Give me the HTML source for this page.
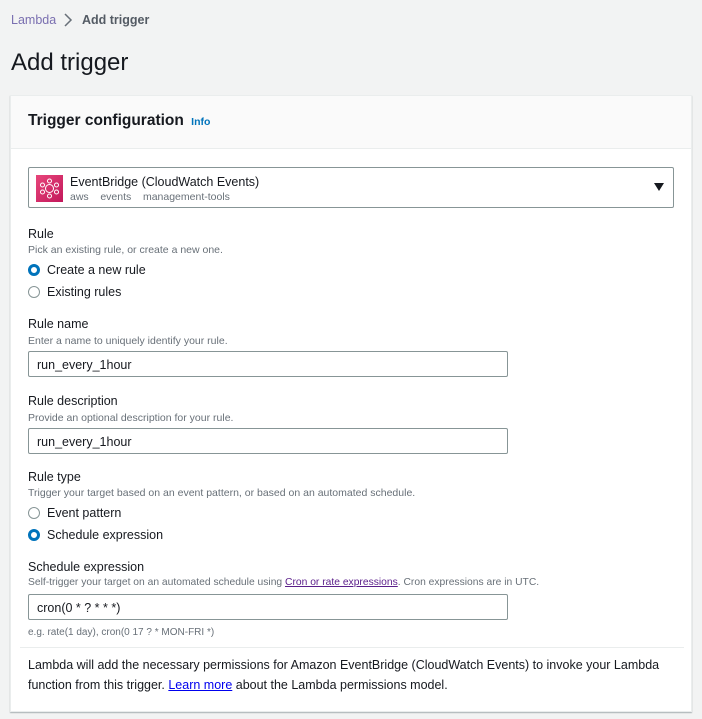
<!DOCTYPE html>
<html><head><style>
*{margin:0;padding:0;box-sizing:border-box}
body{width:702px;height:719px;background:#f2f3f3;font-family:"Liberation Sans",sans-serif;color:#16191f;position:relative;overflow:hidden}
.a{position:absolute;white-space:nowrap}
.lbl{font-size:12.5px;color:#16191f}
.desc{font-size:10.5px;color:#687078}
.inp{position:absolute;left:28px;width:480px;height:26px;border:1px solid #879596;background:#fff;border-radius:2px;font-size:12.5px;padding:6px 0 0 8px}
.rad{position:absolute;left:28px;width:12px;height:12px;border-radius:50%;border:1px solid #879596;background:#fff}
.rad.on{border:3.5px solid #0073bb}
</style></head><body>
<div class="a" style="left:11px;top:13px;font-size:12.5px;color:#545b64"><span style="color:#7a6fb0">Lambda</span></div>
<svg class="a" style="left:63px;top:13px" width="10" height="14"><path d="M2 1l6 6-6 6" fill="none" stroke="#687078" stroke-width="1.5"/></svg>
<div class="a" style="left:82px;top:13px;font-size:12.5px;font-weight:bold;color:#545b64">Add trigger</div>
<div class="a" style="left:11px;top:49px;font-size:24px;color:#16191f">Add trigger</div>
<div class="a" style="left:10px;top:95px;width:682px;height:617px;background:#fff;border:1px solid #eaeded;box-shadow:0 1px 1px rgba(0,28,36,.3)"></div>
<div class="a" style="left:11px;top:96px;width:680px;height:53px;background:#fafafa;border-bottom:1px solid #eaeded"></div>
<div class="a" style="left:28px;top:112px;font-size:15.5px;font-weight:bold">Trigger configuration <span style="font-size:10.5px;color:#0073bb;margin-left:3px">Info</span></div>
<div class="a" style="left:28px;top:167px;width:646px;height:41px;border:1px solid #879596;border-radius:2px;background:#fff"></div>
<div class="a" style="left:36px;top:175px;width:27px;height:27px;background:linear-gradient(135deg,#e7457a,#c2185b)"></div>
<svg class="a" style="left:36px;top:175px" width="27" height="27"><g fill="none" stroke="#fff" stroke-width="1"><circle cx="13.5" cy="13.5" r="4"/><circle cx="13.5" cy="6" r="2"/><circle cx="13.5" cy="21" r="2"/><circle cx="6.5" cy="10" r="2"/><circle cx="20.5" cy="10" r="2"/><circle cx="6.5" cy="17" r="2"/><circle cx="20.5" cy="17" r="2"/></g></svg>
<div class="a" style="left:70px;top:175px;font-size:12.5px">EventBridge (CloudWatch Events)</div>
<div class="a" style="left:70px;top:191px;font-size:10.5px;color:#687078">aws &nbsp;&nbsp; events &nbsp;&nbsp; management-tools</div>
<svg class="a" style="left:654px;top:183px" width="10" height="8"><path d="M0 0h10L5 8z" fill="#16191f"/></svg>

<div class="a lbl" style="left:28px;top:227px">Rule</div>
<div class="a desc" style="left:28px;top:244px">Pick an existing rule, or create a new one.</div>
<div class="rad on" style="top:264px"></div><div class="a lbl" style="left:47px;top:263px">Create a new rule</div>
<div class="rad" style="top:286px"></div><div class="a lbl" style="left:47px;top:285px">Existing rules</div>

<div class="a lbl" style="left:28px;top:317px">Rule name</div>
<div class="a desc" style="left:28px;top:335px">Enter a name to uniquely identify your rule.</div>
<div class="inp" style="top:351px">run_every_1hour</div>

<div class="a lbl" style="left:28px;top:394px">Rule description</div>
<div class="a desc" style="left:28px;top:412px">Provide an optional description for your rule.</div>
<div class="inp" style="top:428px">run_every_1hour</div>

<div class="a lbl" style="left:28px;top:470px">Rule type</div>
<div class="a desc" style="left:28px;top:487px">Trigger your target based on an event pattern, or based on an automated schedule.</div>
<div class="rad" style="top:507px"></div><div class="a lbl" style="left:47px;top:506px">Event pattern</div>
<div class="rad on" style="top:529px"></div><div class="a lbl" style="left:47px;top:528px">Schedule expression</div>

<div class="a lbl" style="left:28px;top:560px">Schedule expression</div>
<div class="a desc" style="left:28px;top:577px;font-size:10.3px">Self-trigger your target on an automated schedule using <span style="color:#5a1e8a;text-decoration:underline">Cron or rate expressions</span>. Cron expressions are in UTC.</div>
<div class="inp" style="top:594px">cron(0 * ? * * *)</div>
<div class="a desc" style="left:28px;top:627px;font-size:10px">e.g. rate(1 day), cron(0 17 ? * MON-FRI *)</div>
<div class="a" style="left:20px;top:647px;width:664px;height:1px;background:#eaeded"></div>
<div class="a" style="left:28px;top:655px;font-size:12.5px;line-height:20px">Lambda will add the necessary permissions for Amazon EventBridge (CloudWatch Events) to invoke your Lambda<br>function from this trigger. <span style="color:#0000ee;text-decoration:underline">Learn more</span> about the Lambda permissions model.</div>
</body></html>
